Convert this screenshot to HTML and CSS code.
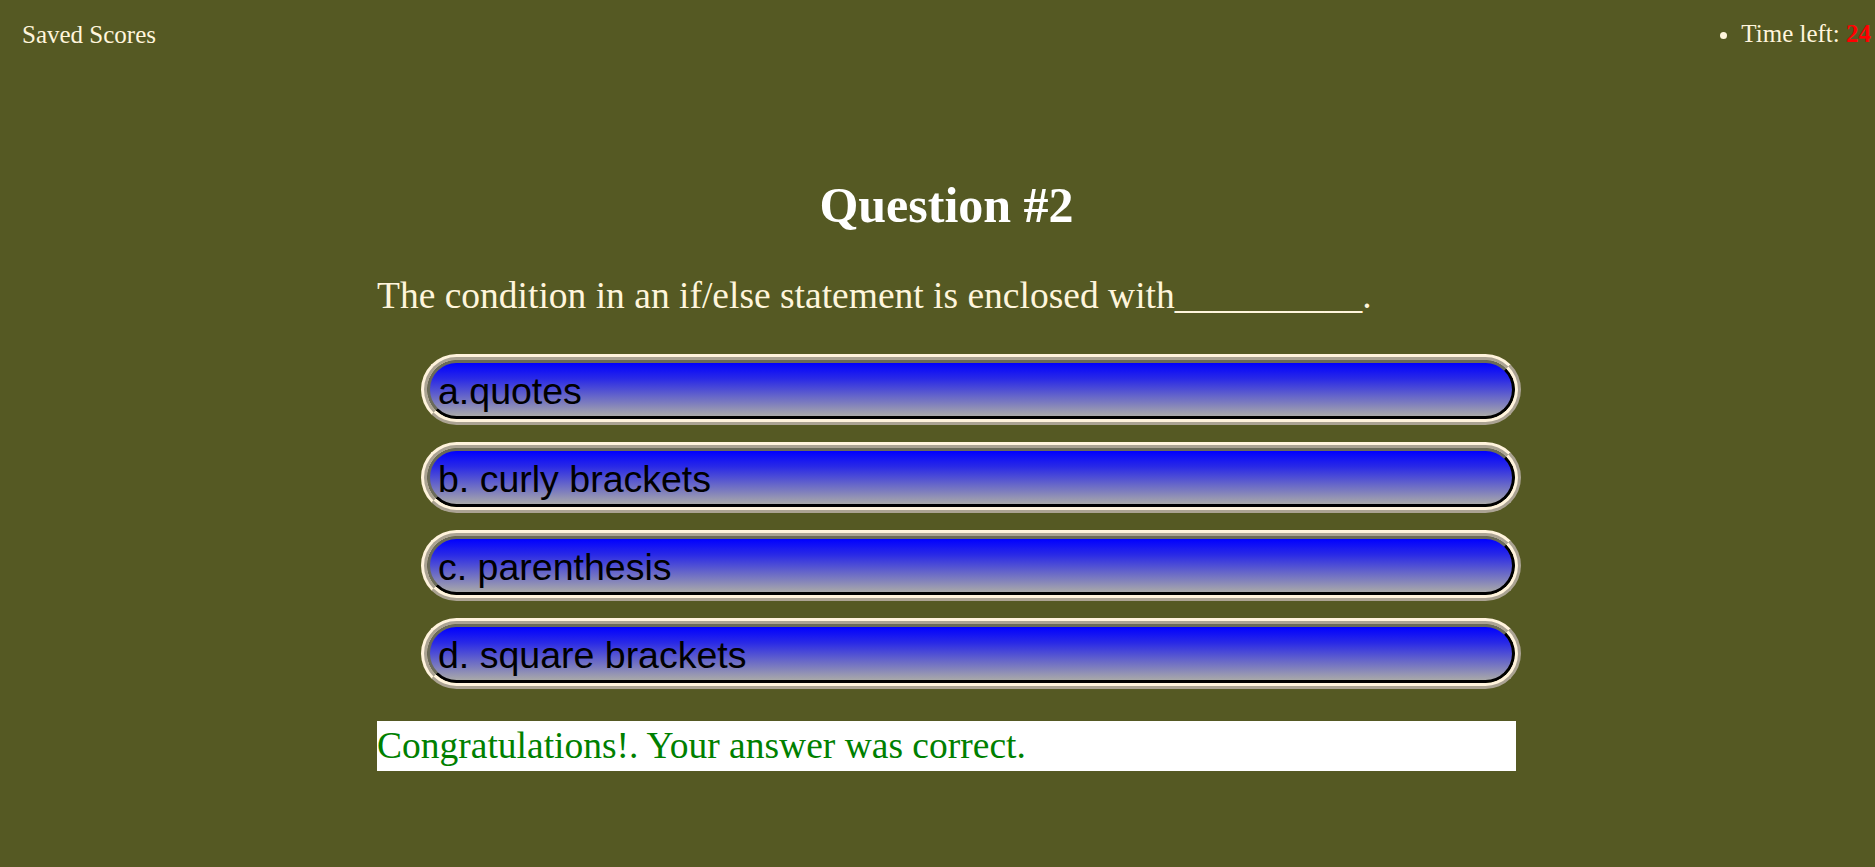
FILE: index.html
```html
<!DOCTYPE html>
<html lang="en">
<head>
<meta charset="utf-8">
<title>Quiz</title>
<link rel="stylesheet" href="styles.css">
</head>
<body>
<header class="topbar">
  <div class="saved">Saved Scores</div>
  <ul class="timer"><li>Time left: <span class="secs">24</span></li></ul>
</header>
<main class="quiz">
  <h1 class="title">Question #2</h1>
  <p class="question">The condition in an if/else statement is enclosed with__________.</p>
  <div class="choices">
    <div class="frame"><button class="choice">a.quotes</button></div>
    <div class="frame"><button class="choice">b. curly brackets</button></div>
    <div class="frame"><button class="choice">c. parenthesis</button></div>
    <div class="frame"><button class="choice">d. square brackets</button></div>
  </div>
  <div class="result">Congratulations!. Your answer was correct.</div>
</main>
</body>
</html>
```
FILE: styles.css
```css
html, body {
  margin: 0;
  padding: 0;
}
body {
  background: #555923;
  color: #fff5dc;
  font-family: "Liberation Serif", "Times New Roman", serif;
  font-size: 25px;
  height: 867px;
  overflow: hidden;
}
.topbar {
  display: flex;
  justify-content: space-between;
  align-items: flex-start;
  padding: 0 4px 0 22px;
  font-size: 25px;
  line-height: 28px;
}
.saved {
  margin-top: 21px;
}
.timer {
  margin: 20px 0 0 0;
  padding: 0;
  list-style: disc;
}
.timer li {
  margin: 0;
}
.secs {
  color: #ff0000;
  font-weight: bold;
}
.quiz {
  width: 1139px;
  margin: 0 auto;
  padding-left: 18px;
  padding-top: 127px;
}
.title {
  margin: 0;
  text-align: center;
  font-size: 50px;
  line-height: 58px;
  color: #ffffff;
  font-weight: bold;
}
.question {
  margin: 41px 0 0 0;
  font-size: 37.5px;
  line-height: 42px;
}
.choices {
  margin-top: 37px;
  padding-left: 44px;
  display: flex;
  flex-direction: column;
  gap: 17px;
}
.frame {
  width: 1100px;
  box-sizing: border-box;
  height: 71px;
  border: 6px ridge #fff3dc;
  border-radius: 36px;
  overflow: hidden;
}
.choice {
  display: block;
  width: 100%;
  height: 59px;
  box-sizing: border-box;
  margin: 0;
  border: 3px solid;
  border-color: #6a6a5a #000000 #000000 #6a6a5a;
  border-radius: 30px;
  background: linear-gradient(to bottom, #0000ff 0%, #2a2ae6 30%, #a9a9a9 100%);
  color: #000000;
  font-family: "Liberation Sans", Arial, sans-serif;
  font-size: 37.5px;
  line-height: 49px;
  padding: 4px 8px 0 8px;
  text-align: left;
  cursor: pointer;
}
.result {
  margin-top: 32px;
  background: #ffffff;
  color: #008000;
  font-size: 37.5px;
  line-height: 50px;
  height: 50px;
}
```
